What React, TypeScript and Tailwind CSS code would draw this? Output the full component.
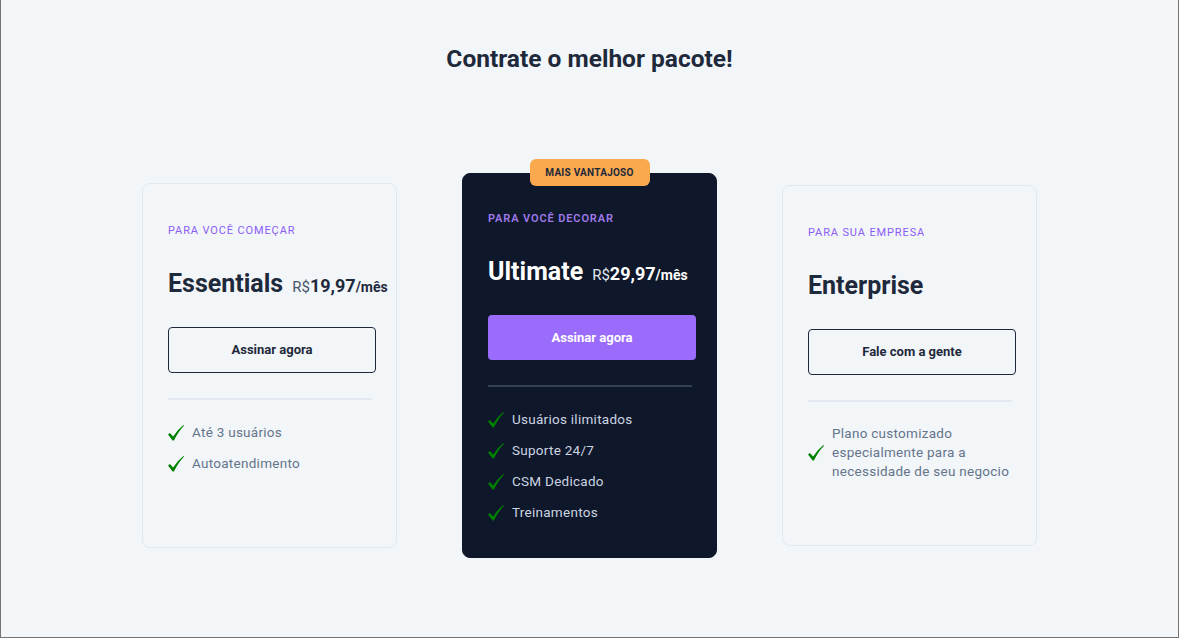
import React from 'react';

interface Plan {
  label: string;
  name: string;
  price?: string;
  cta: string;
  features: string[];
  featured?: boolean;
  height: string;
}

const plans: Plan[] = [
  {
    label: 'Para você começar',
    name: 'Essentials',
    price: '19,97',
    cta: 'Assinar agora',
    features: ['Até 3 usuários', 'Autoatendimento'],
    height: 'h-[365px] pt-[39px]',
  },
  {
    label: 'Para você decorar',
    name: 'Ultimate',
    price: '29,97',
    cta: 'Assinar agora',
    features: ['Usuários ilimitados', 'Suporte 24/7', 'CSM Dedicado', 'Treinamentos'],
    featured: true,
    height: 'h-[385px] pt-[37px]',
  },
  {
    label: 'Para sua empresa',
    name: 'Enterprise',
    cta: 'Fale com a gente',
    features: ['Plano customizado especialmente para a necessidade de seu negocio'],
    height: 'h-[361px] pt-[39px]',
  },
];

const Check = () => (
  <svg viewBox="0 0 16 16" className="w-[16px] h-[16px] shrink-0 mt-[1px]">
    <path
      d="M0 9.6 L1.9 8.1 L5.1 11.4 Q9.2 5 15.4 0 L16 0.7 Q10.4 6.2 5.9 15.6 L4.6 15.6 Z"
      fill="#008000"
    />
  </svg>
);

const PlanCard: React.FC<{ plan: Plan }> = ({ plan }) => {
  const dark = plan.featured;
  return (
    <div
      className={`relative w-[255px] ${plan.height} rounded-lg border pl-[25px] pr-6 flex flex-col ${
        dark ? 'bg-[#0f172a] border-[#0f172a]' : 'bg-[#f3f6f9] border-[#e2e8f0]'
      }`}
    >
      {dark && (
        <div className="absolute -top-[15px] left-1/2 -translate-x-1/2 w-[120px] h-[27px] rounded-md bg-[#fba94e] flex items-center justify-center text-[10px] font-bold tracking-wide text-[#1e293b]">
          MAIS VANTAJOSO
        </div>
      )}
      <div
        className={`text-[11px] leading-4 uppercase tracking-[0.08em] ${
          dark ? 'text-[#9f7aea] font-semibold' : 'text-[#8b5cf6]'
        }`}
      >
        {plan.label}
      </div>
      <div className="mt-[29px] h-8 flex items-baseline gap-[9px] whitespace-nowrap">
        <span className={`text-[25px] font-bold leading-8 ${dark ? 'text-white' : 'text-[#1e293b]'}`}>
          {plan.name}
        </span>
        {plan.price && (
          <span className={dark ? 'text-white' : 'text-[#1e293b]'}>
            <span className={`text-[15px] ${dark ? 'text-[#e2e8f0]' : 'text-[#475569]'}`}>R$</span>
            <span className="text-[18px] font-bold">{plan.price}</span>
            <span className="text-[14px] font-bold">/mês</span>
          </span>
        )}
      </div>
      <button
        className={`mt-[27px] w-[208px] rounded text-[13px] font-bold ${
          dark ? 'h-[45px] bg-[#9b6cfb] text-white' : 'h-[46px] border border-[#1e293b] text-[#1e293b]'
        }`}
      >
        {plan.cta}
      </button>
      <div className={`mt-[25px] w-[204px] h-[2px] ${dark ? 'bg-[#334155]' : 'bg-[#e2e8f0]'}`} />
      <ul className="mt-[22px] flex flex-col gap-[11px]">
        {plan.features.map((f) => (
          <li key={f} className="flex items-center gap-[8px]">
            <Check />
            <span
              className={`text-[13.5px] tracking-[0.02em] ${
                plan.features.length === 1 && !plan.price ? 'leading-[19px] w-[180px]' : 'leading-5'
              } ${dark ? 'text-[#cbd5e1]' : 'text-[#64748b]'}`}
            >
              {f}
            </span>
          </li>
        ))}
      </ul>
    </div>
  );
};

export default function App() {
  return (
    <div className="h-[638px] bg-[#f3f6f9] border-x border-b border-[#737373] flex flex-col items-center font-['Roboto',sans-serif]">
      <h1 className="mt-[43px] text-[24.5px] leading-8 font-bold text-[#1e293b]">Contrate o melhor pacote!</h1>
      <div className="mt-[98px] flex items-center gap-[65px]">
        {plans.map((p) => (
          <PlanCard key={p.name} plan={p} />
        ))}
      </div>
    </div>
  );
}
